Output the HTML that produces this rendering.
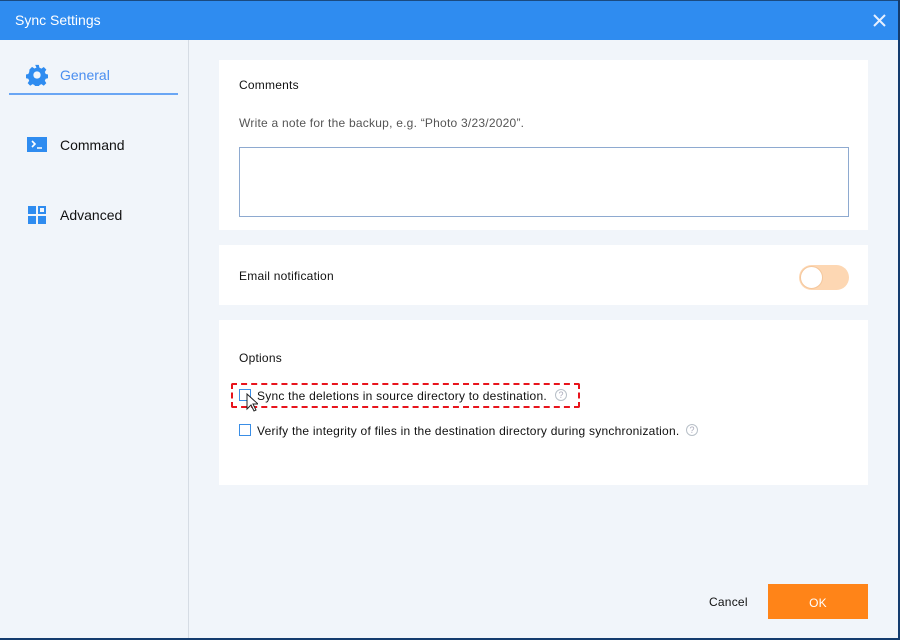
<!DOCTYPE html>
<html><head><meta charset="utf-8"><style>
*{margin:0;padding:0;box-sizing:border-box}
body{width:900px;height:640px;position:relative;overflow:hidden;background:#f1f5fa;font-family:"Liberation Sans",sans-serif;font-size:12px;color:#111;letter-spacing:.23px}
.a{position:absolute}
.panel{position:absolute;left:219px;width:649px;background:#fff}
.cb{position:absolute;width:12px;height:12px;border:1px solid #3a8ee6;background:#fff}
.q{position:absolute;width:12px;height:12px;border:1px solid #b8c0c8;border-radius:50%;color:#aab;font-size:9px;line-height:10px;text-align:center;letter-spacing:0}
</style></head><body>
<div class="a" style="left:0;top:0;width:900px;height:40px;background:#2f8cf0;border-top:1px solid #1a4a80"></div>
<div class="a" style="left:15px;top:12px;color:#fff;font-size:14px;letter-spacing:0">Sync Settings</div>
<svg class="a" style="left:873px;top:14px" width="13" height="13"><path d="M1 1L12 12M12 1L1 12" stroke="#e6f0ff" stroke-width="2"/></svg>
<div class="a" style="left:898px;top:0;width:2px;height:640px;background:#143c6e"></div>
<div class="a" style="left:0;top:638px;width:900px;height:2px;background:#143c6e"></div>
<div class="a" style="left:188px;top:40px;width:1px;height:598px;background:#d6dce4"></div>
<svg class="a" style="left:26px;top:64px" width="22" height="22" viewBox="0 0 24 24"><path fill="#2f8cf0" d="M10 1h4l.6 3 2.2 1 2.6-1.700 2.8 2.8-1.7 2.6 1 2.2 3 .6v4l-3 .6-1 2.2 1.7 2.6-2.8 2.8-2.6-1.7-2.2 1-.6 3h-4l-.6-3-2.2-1-2.6 1.7-2.8-2.8 1.7-2.6-1-2.2-3-.6v-4l3-.6 1-2.2L3.8 6l2.8-2.8 2.6 1.7 2.2-1z"/><circle cx="12" cy="12" r="4" fill="#f1f5fa"/></svg>
<div class="a" style="left:60px;top:67px;font-size:14px;color:#4a8ef0;letter-spacing:0">General</div>
<div class="a" style="left:9px;top:93px;width:169px;height:2px;background:#6aa6f4"></div>
<div class="a" style="left:27px;top:137px;width:20px;height:15px;background:#2f8cf0"></div>
<svg class="a" style="left:27px;top:137px" width="20" height="15"><path d="M5 4l3 3-3 3" stroke="#fff" stroke-width="1.6" fill="none"/><path d="M10 11h5" stroke="#fff" stroke-width="1.5"/></svg>
<div class="a" style="left:60px;top:137px;font-size:14px;letter-spacing:0">Command</div>
<div class="a" style="left:28px;top:206px;width:8px;height:8px;background:#2f8cf0"></div>
<div class="a" style="left:38px;top:206px;width:8px;height:8px;border:2px solid #2f8cf0"></div>
<div class="a" style="left:28px;top:216px;width:8px;height:8px;background:#2f8cf0"></div>
<div class="a" style="left:38px;top:216px;width:8px;height:8px;background:#2f8cf0"></div>
<div class="a" style="left:60px;top:207px;font-size:14px;letter-spacing:0">Advanced</div>
<div class="panel" style="top:60px;height:170px"></div>
<div class="a" style="left:239px;top:78px">Comments</div>
<div class="a" style="left:239px;top:116px;color:#555">Write a note for the backup, e.g. “Photo 3/23/2020”.</div>
<div class="a" style="left:239px;top:147px;width:610px;height:70px;border:1px solid #8eaad0;background:#fff"></div>
<div class="panel" style="top:245px;height:60px"></div>
<div class="a" style="left:239px;top:269px">Email notification</div>
<div class="a" style="left:799px;top:265px;width:50px;height:25px;border-radius:13px;background:#fdd7b3"></div>
<div class="a" style="left:800px;top:266px;width:23px;height:23px;border-radius:50%;background:#fff;border:1px solid #f5c79c"></div>
<div class="panel" style="top:320px;height:165px"></div>
<div class="a" style="left:239px;top:351px">Options</div>
<div class="a" style="left:231px;top:383px;width:349px;height:25px;border:2px dashed #e8141c;border-radius:2px"></div>
<div class="cb" style="left:239px;top:389px"></div>
<div class="a" style="left:257px;top:389px">Sync the deletions in source directory to destination.</div>
<div class="q" style="left:555px;top:389px">?</div>
<svg class="a" style="left:246px;top:393px" width="12" height="20"><path d="M1 1v15l4-4 3 6 2-1-3-6h5z" fill="#fff" stroke="#222" stroke-width="1"/></svg>
<div class="cb" style="left:239px;top:424px"></div>
<div class="a" style="left:257px;top:424px">Verify the integrity of files in the destination directory during synchronization.</div>
<div class="q" style="left:686px;top:424px">?</div>
<div class="a" style="left:709px;top:595px">Cancel</div>
<div class="a" style="left:768px;top:584px;width:100px;height:35px;background:#ff8418;color:#fff;text-align:center;line-height:38px">OK</div>
</body></html>
